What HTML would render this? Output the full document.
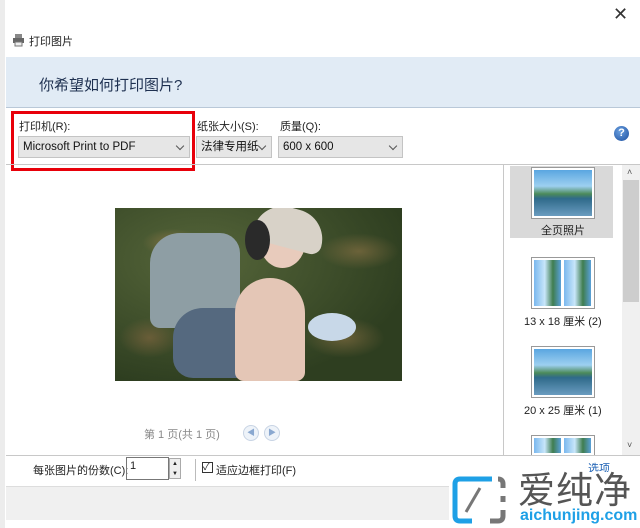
<!DOCTYPE html>
<html><head><meta charset="utf-8"><style>
*{margin:0;padding:0;box-sizing:border-box}
body{width:640px;height:528px;overflow:hidden;background:#fff;font-family:"Liberation Sans","Noto Sans CJK SC",sans-serif;font-size:11px;color:#222;position:relative}
.a{position:absolute}
.dd{position:absolute;height:22px;background:#e6e6e6;border:1px solid #c4c4c4;font-size:11.5px;line-height:20px;padding-left:4px;color:#111}
.dd:after{content:"";position:absolute;right:6px;top:6px;width:5px;height:5px;border-right:1px solid #555;border-bottom:1px solid #555;transform:rotate(45deg)}
.thumb{position:absolute;left:531px;width:64px;height:52px;border:1px solid #999;background:#fff;padding:2px}
.land{width:100%;height:100%;background:linear-gradient(180deg,#5aa6e0 0%,#9dd0f0 35%,#4c8a5a 52%,#2f6a8a 62%,#6a9cc0 100%)}
.port{display:inline-block;width:27px;height:100%;background:linear-gradient(90deg,#7ab8ee 0%,#c8e6fa 40%,#3f7d4f 70%,#5aa0d8 100%)}
</style></head><body>
<div class="a" style="left:0;top:0;width:5px;height:528px;background:#ececec"></div>
<div class="a" style="left:613px;top:4px;font-size:18px;color:#333">✕</div>
<svg class="a" style="left:12px;top:33px" width="14" height="14"><rect x="3" y="1" width="7" height="4" fill="#888"/><rect x="1" y="5" width="11" height="5" fill="#666"/><rect x="3" y="9" width="7" height="4" fill="#eee" stroke="#777"/></svg>
<div class="a" style="left:29px;top:33px;font-size:11px">打印图片</div>
<div class="a" style="left:6px;top:57px;width:634px;height:51px;background:#e1ebf5;border-bottom:1px solid #b9c8d8"></div>
<div class="a" style="left:39px;top:74px;font-size:15px;color:#1e3050">你希望如何打印图片?</div>
<div class="a" style="left:19px;top:118px">打印机(R):</div>
<div class="a" style="left:197px;top:118px">纸张大小(S):</div>
<div class="a" style="left:280px;top:118px">质量(Q):</div>
<div class="dd" style="left:18px;top:136px;width:172px">Microsoft Print to PDF</div>
<div class="dd" style="left:196px;top:136px;width:76px">法律专用纸</div>
<div class="dd" style="left:278px;top:136px;width:125px">600 x 600</div>
<div class="a" style="left:11px;top:111px;width:184px;height:60px;border:3px solid #e8000a"></div>
<div class="a" style="left:614px;top:126px;width:15px;height:15px;border-radius:50%;background:radial-gradient(circle at 40% 35%,#6aa0e0,#1b4e9e);color:#fff;font-size:11px;font-weight:bold;text-align:center;line-height:15px">?</div>
<div class="a" style="left:6px;top:164px;width:634px;height:1px;background:#c8c8c8"></div>
<div class="a" style="left:503px;top:165px;width:1px;height:290px;background:#c8c8c8"></div>
<div class="a" style="left:622px;top:165px;width:18px;height:290px;background:#f0f0f0"></div>
<div class="a" style="left:623px;top:180px;width:16px;height:122px;background:#cdcdcd"></div>
<div class="a" style="left:627px;top:167px;font-size:9px;color:#555">˄</div>
<div class="a" style="left:627px;top:440px;font-size:9px;color:#555">˅</div>
<div class="a" style="left:510px;top:166px;width:103px;height:72px;background:#d9d9d9"></div>
<div class="thumb" style="top:167px"><div class="land"></div></div>
<div class="a" style="left:541px;top:222px">全页照片</div>
<div class="thumb" style="top:257px"><span class="port"></span><span class="port" style="margin-left:3px"></span></div>
<div class="a" style="left:524px;top:313px">13 x 18 厘米 (2)</div>
<div class="thumb" style="top:346px"><div class="land"></div></div>
<div class="a" style="left:524px;top:402px">20 x 25 厘米 (1)</div>
<div class="thumb" style="top:435px;height:20px;border-bottom:none"><span class="port"></span><span class="port" style="margin-left:3px"></span></div>
<!-- photo -->
<div class="a" style="left:115px;top:208px;width:287px;height:173px;overflow:hidden;background:
radial-gradient(ellipse 30px 14px at 20% 20%,rgba(170,130,80,.5),transparent),
radial-gradient(ellipse 40px 18px at 85% 25%,rgba(170,130,80,.45),transparent),
radial-gradient(ellipse 40px 20px at 80% 75%,rgba(170,130,80,.45),transparent),
radial-gradient(ellipse 30px 20px at 12% 75%,rgba(150,110,70,.5),transparent),
radial-gradient(ellipse at 30% 30%,#56663a,#2e3e20 75%);">
<div class="a" style="left:35px;top:25px;width:90px;height:95px;background:#8e9ea4;border-radius:30px 20px 10px 10px"></div>
<div class="a" style="left:58px;top:100px;width:80px;height:70px;background:#55697f;border-radius:30px 20px 0 20px"></div>
<div class="a" style="left:120px;top:70px;width:70px;height:103px;background:#e4c6b6;border-radius:40px 40px 10px 10px"></div>
<div class="a" style="left:145px;top:10px;width:45px;height:50px;background:#e8cbbc;border-radius:50%"></div>
<div class="a" style="left:140px;top:0;width:70px;height:40px;background:#d8d2c8;border-radius:30px 30px 10px 10px;transform:rotate(15deg)"></div>
<div class="a" style="left:130px;top:12px;width:25px;height:40px;background:#2a2a2a;border-radius:50%"></div>
<div class="a" style="left:193px;top:105px;width:48px;height:28px;background:#c8d8e8;border-radius:50%"></div>
</div>
<div class="a" style="left:144px;top:426px;color:#888">第 1 页(共 1 页)</div>
<div class="a" style="left:243px;top:425px;width:16px;height:16px;border-radius:50%;border:1px solid #c8d4e4;background:#eef3f9;color:#8aa8d0;font-size:8px;line-height:14px;text-align:center">◀</div>
<div class="a" style="left:264px;top:425px;width:16px;height:16px;border-radius:50%;border:1px solid #c8d4e4;background:#eef3f9;color:#8aa8d0;font-size:8px;line-height:14px;text-align:center">▶</div>
<div class="a" style="left:6px;top:455px;width:634px;height:1px;background:#c8c8c8"></div>
<div class="a" style="left:33px;top:462px">每张图片的份数(C):</div>
<div class="a" style="left:126px;top:457px;width:43px;height:23px;border:1px solid #777;padding:2px 3px">1</div>
<div class="a" style="left:169px;top:458px;width:12px;height:21px;border:1px solid #aaa;background:#eee;font-size:6px;line-height:10px;text-align:center">▲<br>▼</div>
<div class="a" style="left:195px;top:459px;width:1px;height:22px;background:#bbb"></div>
<div class="a" style="left:202px;top:462px;width:11px;height:11px;border:1px solid #333;font-size:10px;line-height:9px">✓</div>
<div class="a" style="left:216px;top:462px">适应边框打印(F)</div>
<div class="a" style="left:588px;top:460px;color:#1a5fb4">选项</div>
<div class="a" style="left:6px;top:486px;width:634px;height:34px;background:#f0f0f0;border-top:1px solid #ddd"></div>
<!-- watermark -->
<div class="a" style="left:449px;top:472px;width:191px;height:56px;background:#fff"></div>
<svg class="a" style="left:452px;top:476px" width="56" height="48"><path d="M40 3H8Q3 3 3 8V40Q3 45 8 45H20" stroke="#1ea0e6" stroke-width="5" fill="none"/><path d="M46 3Q51 3 51 8V12M51 20V26M51 34V40Q51 45 46 45H38" stroke="#777" stroke-width="5" fill="none"/><path d="M14 36L28 12" stroke="#777" stroke-width="3"/></svg>
<div class="a" style="left:518px;top:470px;font-size:37px;color:#555;letter-spacing:1px;line-height:42px">爱纯净</div>
<div class="a" style="left:520px;top:507px;font-size:16px;font-weight:bold;color:#1ea0e6">aichunjing.com</div>
</body></html>
